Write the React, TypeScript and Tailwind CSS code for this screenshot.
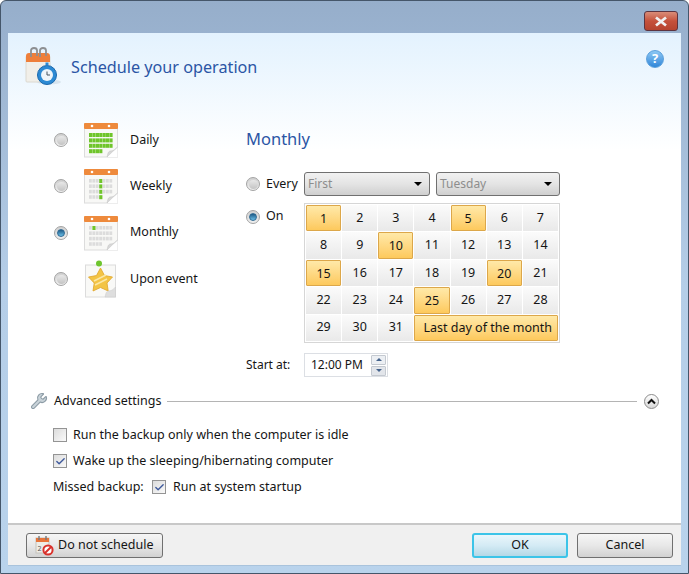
import { Check, Wrench } from "lucide-react";

const font = { fontFamily: '"Noto Sans", "Open Sans", sans-serif' };

const marked = [1, 5, 10, 15, 20, 25];
const days = Array.from({ length: 31 }, (_, i) => i + 1);

const CalendarPage = ({ isOn }: { isOn: (row: number, col: number) => boolean }) => (
  <svg width="36" height="36" viewBox="0 0 36 36">
    <rect x="1.5" y="2" width="33" height="33" fill="#f8f8f6" stroke="#dcdcdc" />
    <rect x="1" y="1" width="34" height="6" rx="1" fill="#ee8a3c" />
    <circle cx="9" cy="4" r="1.3" fill="#fff" />
    <circle cx="26" cy="4" r="1.3" fill="#fff" />
    {[0, 1, 2, 3].map((row) =>
      [0, 1, 2, 3, 4, 5, 6].map((col) =>
        row === 3 && col > 3 ? null : (
          <rect
            key={`${row}-${col}`}
            x={6 + col * 3.4}
            y={11 + row * 5.4}
            width={isOn(row, col) ? 3.2 : 2.8}
            height={isOn(row, col) ? 4 : 3.6}
            fill={isOn(row, col) ? "#6fc52a" : "#dcdcdc"}
          />
        )
      )
    )}
    <path d="M24 35 L34.5 25 L34.5 35 Z" fill="#fff" />
    <path d="M24 35 C25 31 25 30 27 29 C30 29 32 28 34.5 25 Z" fill="#d8d8d8" stroke="#c4c4c4" strokeWidth="0.5" />
  </svg>
);

const EventPage = () => (
  <svg width="36" height="38" viewBox="0 0 36 38">
    <rect x="2.5" y="5" width="30" height="32" fill="#f9f9f7" stroke="#dcdcdc" />
    <path
      d="M17.5 8 L21.5 15.5 L29.5 17 L24 23 L25.2 31 L17.5 27.5 L10 31 L11.2 23 L5.5 17 L13.5 15.5 Z"
      fill="#f3c445"
      stroke="#e0a52a"
      strokeWidth="0.8"
    />
    <path d="M11 21 L23 15 M12 25 L24 19" stroke="#fbe7a6" strokeWidth="1.6" />
    <circle cx="16" cy="3.5" r="3" fill="#6ec52e" />
    <path d="M22 37 C23 33 23 32 25 31 C28 31 30 30 32.5 27 L32.5 37 Z" fill="#dedede" stroke="#c8c8c8" strokeWidth="0.5" />
  </svg>
);

const ScheduleIcon = () => (
  <svg width="38" height="40" viewBox="0 0 38 40">
    <ellipse cx="24" cy="35" rx="12" ry="2.5" fill="#d8e4ee" />
    <rect x="1" y="9" width="24" height="26" rx="1" fill="#f1efe9" stroke="#dbd8d0" />
    <path d="M1 9 Q1 6 4 6 L22 6 Q25 6 25 9 L25 15 L1 15 Z" fill="#ee7f3b" />
    <path d="M6 10 V3.5 Q6 1 9 1 Q12 1 12 3.5 V9 M15 10 V3.5 Q15 1 18 1 Q21 1 21 3.5 V9" fill="none" stroke="#8d8f92" strokeWidth="1.8" />
    <circle cx="22" cy="28" r="9.5" fill="#2c8ad4" stroke="#1a68ad" />
    <circle cx="22" cy="28" r="6" fill="#eef5fa" />
    <rect x="20.5" y="15.5" width="3" height="3" fill="#2c8ad4" />
    <path d="M22 24.5 V28 H25" fill="none" stroke="#44525e" strokeWidth="1" />
  </svg>
);

const NoCalendarIcon = () => (
  <svg width="19" height="21" viewBox="0 0 19 21">
    <rect x="1" y="3" width="13" height="15" fill="#eeece6" stroke="#c4c2bc" />
    <rect x="1" y="3" width="13" height="4" fill="#e8743a" />
    <path d="M4 1 V5 M11 1 V5" stroke="#77797c" strokeWidth="1.4" />
    <text x="2.5" y="16" fontSize="7" fill="#555">2</text>
    <circle cx="13" cy="15" r="4.6" fill="#fff" stroke="#d9312b" strokeWidth="2" />
    <path d="M10 18 L16 12" stroke="#d9312b" strokeWidth="2" />
  </svg>
);

const Radio = ({ on = false }: { on?: boolean }) => (
  <span className="flex h-[14px] w-[14px] shrink-0 items-center justify-center rounded-full border border-[#a3a3a3] bg-gradient-to-b from-[#d0d0d0] to-[#f0f0f0]">
    <span
      className={
        on
          ? "h-[8px] w-[8px] rounded-full border border-[#2f6a94] bg-gradient-to-b from-[#1c5a86] to-[#6cc0e8]"
          : "h-[9px] w-[9px] rounded-full bg-gradient-to-b from-[#e8e8e8] to-[#c4c4c4]"
      }
    />
  </span>
);

const CheckBox = ({ on = false }: { on?: boolean }) => (
  <span className="flex h-[14px] w-[14px] shrink-0 items-center justify-center border border-[#949494] bg-gradient-to-br from-[#dcdcdc] to-[#fafafa]">
    {on && <Check size={11} strokeWidth={3} className="text-[#3f5a9c]" />}
  </span>
);

const Select = ({ label, width }: { label: string; width: string }) => (
  <div
    className={`flex h-[24px] ${width} items-center justify-between rounded-[3px] border border-[#707070] bg-gradient-to-b from-[#f1f1f1] via-[#e4e4e4] to-[#cfcfcf] pl-[3px] pr-[7px] text-[12px] text-[#8d8d8d]`}
  >
    {label}
    <span className="h-0 w-0 border-x-[4px] border-t-[4px] border-x-transparent border-t-black" />
  </div>
);

const ScheduleOption = ({ label, on, icon }: { label: string; on?: boolean; icon: React.ReactNode }) => (
  <div className="flex h-[46.3px] items-center">
    <div className="w-[29px]">
      <Radio on={on} />
    </div>
    <div className="flex w-[47px] justify-start">{icon}</div>
    <span>{label}</span>
  </div>
);

const DayCell = ({ day }: { day: number }) => {
  const on = marked.includes(day);
  return (
    <div
      className={
        on
          ? "flex items-center justify-center rounded-[1px] border border-[#dca74a] bg-gradient-to-b from-[#ffe9a8] to-[#fdc95c] pt-[2px]"
          : "flex items-center justify-center bg-gradient-to-b from-[#fbfbfb] to-[#e9e9e9]"
      }
    >
      {day}
    </div>
  );
};

export default function App() {
  return (
    <div
      style={font}
      className="flex h-[574px] w-[689px] flex-col overflow-hidden rounded-t-[6px] border border-[#45566a] bg-gradient-to-b from-[#96aecb] via-[#b5cee8] to-[#b9d3ec] text-[12.5px] text-[#151515]"
    >
      <div className="flex h-[32px] shrink-0 justify-end pr-[10px] pt-[10px]">
        <div className="flex h-[20px] w-[34px] items-center justify-center rounded-[3px] border border-[#5c3440] bg-gradient-to-b from-[#d98c78] via-[#c5513b] to-[#b5432f]">
          <svg width="14" height="11" viewBox="0 0 14 11">
            <path d="M2 1.5 L12 9.5 M12 1.5 L2 9.5" stroke="#f1f1f1" strokeWidth="2.8" />
          </svg>
        </div>
      </div>

      <div className="mx-[7px] mb-[7px] flex min-h-0 flex-1 flex-col border-b border-[#a9c3dc]">
        <div className="flex flex-1 flex-col bg-gradient-to-b from-[#e3f2fe] to-white to-[24%]">
          <div className="flex h-[87px] items-start justify-between pl-[17px] pr-[17px] pt-[14px]">
            <div className="flex items-center gap-[8px]">
              <ScheduleIcon />
              <span className="text-[16.2px] text-[#2b55a5]">Schedule your operation</span>
            </div>
            <span className="mt-[3px] flex h-[18px] w-[18px] items-center justify-center rounded-full border border-[#5a9fdc] bg-gradient-to-b from-[#8cc8f4] to-[#2e86d8] text-[13px] font-bold text-white">
              ?
            </span>
          </div>

          <div className="flex h-[271px] pl-[46px]">
            <div className="mt-[-3px] w-[192px]">
              <ScheduleOption label="Daily" icon={<CalendarPage isOn={() => true} />} />
              <ScheduleOption label="Weekly" icon={<CalendarPage isOn={(_, c) => c === 3} />} />
              <ScheduleOption label="Monthly" on icon={<CalendarPage isOn={(r, c) => r === 0 && c === 1} />} />
              <ScheduleOption label="Upon event" icon={<EventPage />} />
            </div>

            <div className="w-[315px]">
              <div className="h-[38px] pt-[5px] text-[16.5px] leading-[28px] text-[#2b55a5]">Monthly</div>
              <div className="flex h-[45px] items-center pt-[7px]">
                <Radio />
                <span className="ml-[6px] w-[38px]">Every</span>
                <Select label="First" width="w-[126px]" />
                <div className="w-[6px]" />
                <Select label="Tuesday" width="w-[124px]" />
              </div>
              <div className="flex items-start">
                <div className="flex h-[27px] w-[58px] items-center">
                  <Radio on />
                  <span className="ml-[6px]">On</span>
                </div>
                <div className="grid h-[140px] w-[256px] grid-cols-7 grid-rows-5 gap-[1px] border border-[#d6d6d6] bg-white p-[1px]">
                  {days.map((day) => (
                    <DayCell key={day} day={day} />
                  ))}
                  <div className="col-span-4 flex items-center justify-center rounded-[1px] border border-[#dca74a] bg-gradient-to-b from-[#ffe9a8] to-[#fdc95c] pl-[3px] pt-[2px]">
                    Last day of the month
                  </div>
                </div>
              </div>
              <div className="mt-[10px] flex items-center">
                <span className="w-[58px] text-[12px]">Start at:</span>
                <div className="flex h-[24px] w-[84px] items-center justify-between border border-[#dcdfe4] bg-white pl-[6px] pr-[1px] text-[12px]">
                  12:00 PM
                  <div className="flex flex-col gap-[1px]">
                    <span className="flex h-[10px] w-[15px] items-center justify-center rounded-[1px] border border-[#c4c9d0] bg-[#eceff3]">
                      <span className="h-0 w-0 border-x-[3px] border-b-[3px] border-x-transparent border-b-[#44638c]" />
                    </span>
                    <span className="flex h-[10px] w-[15px] items-center justify-center rounded-[1px] border border-[#c4c9d0] bg-[#e2e5ea]">
                      <span className="h-0 w-0 border-x-[3px] border-t-[3px] border-x-transparent border-t-[#44638c]" />
                    </span>
                  </div>
                </div>
              </div>
            </div>
          </div>

          <div className="flex h-[20px] items-center pl-[22px] pr-[22px]">
            <Wrench size={18} strokeWidth={1.5} className="fill-[#c9d3d9] text-[#8d9ca6]" />
            <span className="ml-[6px]">Advanced settings</span>
            <div className="ml-[6px] mr-[7px] h-[1px] flex-1 bg-[#b4b4b4]" />
            <span className="flex h-[15px] w-[15px] items-center justify-center rounded-full border border-[#8b8b8b] bg-gradient-to-b from-white to-[#d8d8d8]">
              <svg width="9" height="7" viewBox="0 0 9 7">
                <path d="M1 5.5 L4.5 2 L8 5.5" fill="none" stroke="#111" strokeWidth="2" />
              </svg>
            </span>
          </div>

          <div className="flex flex-col gap-[8px] pl-[45px] pt-[15px]">
            <div className="flex h-[18px] items-center gap-[6px]">
              <CheckBox />
              Run the backup only when the computer is idle
            </div>
            <div className="flex h-[18px] items-center gap-[6px]">
              <CheckBox on />
              Wake up the sleeping/hibernating computer
            </div>
            <div className="flex h-[18px] items-center">
              <span className="w-[99px]">Missed backup:</span>
              <CheckBox on />
              <span className="ml-[7px]">Run at system startup</span>
            </div>
          </div>
        </div>

        <div className="flex h-[42px] shrink-0 items-start justify-between border-t-2 border-[#c8c8c8] bg-[#f0f0f0] pl-[18px] pr-[8px] pt-[8px]">
          <button className="flex h-[25px] w-[137px] items-center gap-[4px] rounded-[3px] border border-[#707070] bg-gradient-to-b from-[#f6f6f6] via-[#e8e8e8] to-[#d2d2d2] pl-[8px]">
            <NoCalendarIcon />
            Do not schedule
          </button>
          <div className="flex gap-[9px]">
            <button className="h-[25px] w-[96px] rounded-[3px] border-2 border-[#3cc4e8] bg-gradient-to-b from-[#eaf6fb] via-[#d4ebf5] to-[#b4d8e6]">
              OK
            </button>
            <button className="h-[25px] w-[96px] rounded-[3px] border border-[#707070] bg-gradient-to-b from-[#f6f6f6] via-[#e8e8e8] to-[#d2d2d2]">
              Cancel
            </button>
          </div>
        </div>
      </div>
    </div>
  );
}
